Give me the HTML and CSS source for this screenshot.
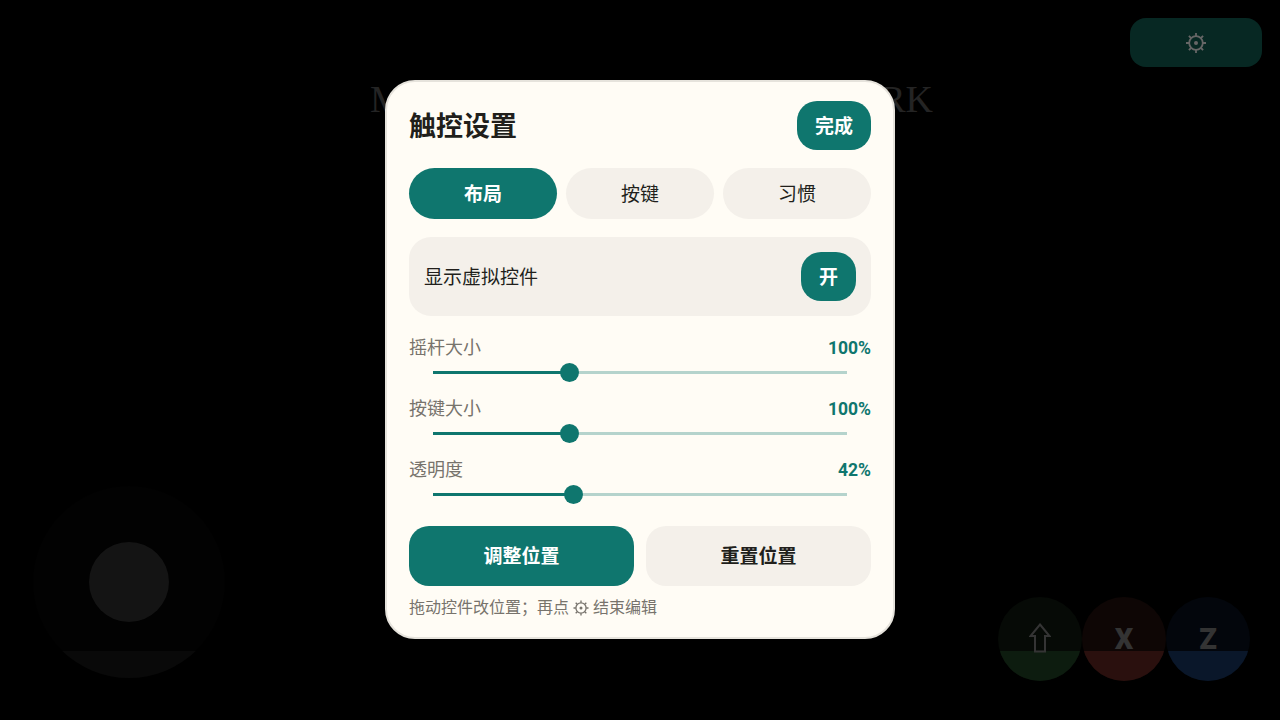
FILE: index.html
```html
<!DOCTYPE html>
<html lang="zh-CN">
<head>
    <meta charset="UTF-8">
    <meta name="viewport" content="width=device-width, initial-scale=1.0">
    <title>触控设置</title>
    <link rel="stylesheet" href="styles.css">
</head>
<body>
    <svg class="defs" width="0" height="0" aria-hidden="true">
        <symbol id="gear" viewBox="0 0 24 24">
            <circle cx="12" cy="12" r="6.8" fill="none" stroke="currentColor" stroke-width="1.8"/>
            <circle cx="12" cy="12" r="2" fill="currentColor"/>
            <path d="M12 2v3M12 19v3M2 12h3M19 12h3M4.9 4.9l2.1 2.1M17 17l2.1 2.1M4.9 19.1L7 17M17 7l2.1-2.1" fill="none" stroke="currentColor" stroke-width="1.8"/>
        </symbol>
    </svg>

    <div class="stage">
        <div class="game-title">MOTION OF THE NIGHT WORK</div>
        <button class="gear-btn"><svg class="gear-icon"><use href="#gear"/></svg></button>

        <div class="joystick">
            <div class="strip"></div>
            <div class="knob"></div>
        </div>

        <div class="actions">
            <div class="action action-green">
                <div class="strip"></div>
                <svg class="arrow-icon" viewBox="0 0 22 30"><path d="M11 1.5L20.5 13H16V28.5H6V13H1.5Z" fill="none" stroke="currentColor" stroke-width="2"/></svg>
            </div>
            <div class="action action-red"><div class="strip"></div><span class="action-label">X</span></div>
            <div class="action action-blue"><div class="strip"></div><span class="action-label">Z</span></div>
        </div>

        <div class="overlay">
            <div class="panel">
                <div class="panel-head">
                    <h1>触控设置</h1>
                    <button class="done-btn">完成</button>
                </div>

                <div class="tabs">
                    <button class="tab active">布局</button>
                    <button class="tab">按键</button>
                    <button class="tab">习惯</button>
                </div>

                <div class="toggle-row">
                    <span>显示虚拟控件</span>
                    <button class="toggle-btn">开</button>
                </div>

                <div class="slider">
                    <div class="slider-head"><span>摇杆大小</span><b>100%</b></div>
                    <div class="track"><div class="fill" style="width: 32.8%"></div><div class="thumb"></div></div>
                </div>
                <div class="slider">
                    <div class="slider-head"><span>按键大小</span><b>100%</b></div>
                    <div class="track"><div class="fill" style="width: 32.8%"></div><div class="thumb"></div></div>
                </div>
                <div class="slider">
                    <div class="slider-head"><span>透明度</span><b>42%</b></div>
                    <div class="track"><div class="fill" style="width: 33.7%"></div><div class="thumb"></div></div>
                </div>

                <div class="panel-actions">
                    <button class="wide-btn primary">调整位置</button>
                    <button class="wide-btn">重置位置</button>
                </div>
                <p class="hint">拖动控件改位置；再点 <svg class="hint-gear"><use href="#gear"/></svg> 结束编辑</p>
            </div>
        </div>
    </div>
</body>
</html>
```

FILE: styles.css
```css
* {
    box-sizing: border-box;
}

html, body {
    margin: 0;
    height: 100%;
    background: #000;
}

body {
    font-family: Roboto, "Noto Sans CJK SC", sans-serif;
    color: #211f1b;
}

button {
    font-family: inherit;
    border: 0;
    padding: 0;
}

.defs {
    position: absolute;
}

.stage {
    position: relative;
    width: 1280px;
    height: 720px;
    overflow: hidden;
}

.game-title {
    position: absolute;
    left: 370px;
    top: 76px;
    width: 563px;
    font-family: "Liberation Serif", serif;
    font-size: 38px;
    line-height: 46px;
    white-space: nowrap;
    text-align: justify;
    text-align-last: justify;
    color: #242424;
}

.gear-btn {
    position: absolute;
    left: 1130px;
    top: 18px;
    width: 132px;
    height: 49px;
    border-radius: 16px;
    background: #072823;
    color: #666;
    display: flex;
    align-items: center;
    justify-content: center;
}

.gear-icon {
    width: 24px;
    height: 24px;
}

.joystick {
    position: absolute;
    left: 33px;
    top: 486px;
    width: 192px;
    height: 192px;
    border-radius: 50%;
    overflow: hidden;
    background: #020202;
}

.knob {
    position: absolute;
    left: 56px;
    top: 56px;
    width: 80px;
    height: 80px;
    border-radius: 50%;
    background: #141414;
}

.strip {
    position: absolute;
    left: 0;
    right: 0;
    bottom: 0;
    height: 30px;
}

.joystick .strip {
    height: 27px;
    background: #090909;
}

.actions {
    position: absolute;
    left: 998px;
    top: 597px;
    display: flex;
}

.action {
    position: relative;
    width: 84px;
    height: 84px;
    border-radius: 50%;
    overflow: hidden;
    display: flex;
    align-items: center;
    justify-content: center;
}

.action-label {
    position: relative;
    font-weight: 900;
    font-size: 29px;
    color: #333;
}

.arrow-icon {
    position: relative;
    width: 22px;
    height: 30px;
    margin-bottom: 3px;
    color: #343434;
}

.action-green { background: #060a06; }
.action-green .strip { background: #0d1c0f; }
.action-red { background: #0e0605; }
.action-red .strip { background: #2a100e; }
.action-blue { background: #03060c; }
.action-blue .strip { background: #0a172a; }

.overlay {
    position: absolute;
    inset: 0;
    display: flex;
    align-items: center;
    justify-content: center;
}

.panel {
    width: 510px;
    height: 559px;
    margin-bottom: 1px;
    padding: 19px 22px 0;
    background: #fffcf5;
    border: 2px solid #e6e3dc;
    border-radius: 30px;
}

.panel-head {
    display: flex;
    align-items: center;
    justify-content: space-between;
}

h1 {
    margin: 0 0 2px;
    font-size: 27px;
    font-weight: 700;
}

.done-btn {
    width: 74px;
    height: 49px;
    padding-bottom: 2px;
    border-radius: 20px;
    background: #0f766e;
    color: #fff;
    font-size: 19px;
    font-weight: 700;
}

.tabs {
    display: flex;
    gap: 9px;
    margin-top: 18px;
}

.tab {
    flex: 1;
    height: 51px;
    padding-bottom: 2px;
    border-radius: 26px;
    background: #f4f0ea;
    color: #211f1b;
    font-size: 19px;
}

.tab.active {
    background: #0f766e;
    color: #fff;
    font-weight: 700;
}

.toggle-row {
    display: flex;
    align-items: center;
    justify-content: space-between;
    height: 79px;
    margin-top: 18px;
    padding: 0 15px;
    border-radius: 22px;
    background: #f4f0ea;
    font-size: 19px;
}

.toggle-row span {
    margin-bottom: 2px;
}

.toggle-btn {
    width: 55px;
    height: 49px;
    padding-bottom: 2px;
    border-radius: 20px;
    background: #0f766e;
    color: #fff;
    font-size: 19px;
    font-weight: 700;
}

.slider {
    height: 61px;
}

.toggle-row + .slider {
    margin-top: 19px;
}

.slider-head {
    display: flex;
    align-items: center;
    justify-content: space-between;
    height: 22px;
    font-size: 18px;
    color: #77736c;
}

.slider-head b {
    margin-top: 4px;
    font-size: 17.5px;
    color: #0f766e;
}

.track {
    position: relative;
    display: flex;
    align-items: center;
    height: 19px;
    margin: 6px 24px 0;
    background: linear-gradient(#b5d3cc, #b5d3cc) center / 100% 3px no-repeat;
}

.fill {
    position: relative;
    height: 3px;
    background: #0f766e;
}

.thumb {
    width: 19px;
    height: 19px;
    margin-left: -9px;
    border-radius: 50%;
    background: #0f766e;
    z-index: 1;
}

.panel-actions {
    display: flex;
    gap: 12px;
    margin-top: 8px;
}

.wide-btn {
    flex: 1;
    height: 60px;
    padding-bottom: 4px;
    border-radius: 20px;
    background: #f4f0ea;
    color: #211f1b;
    font-size: 19px;
    font-weight: 700;
}

.wide-btn.primary {
    background: #0f766e;
    color: #fff;
}

.hint {
    display: flex;
    align-items: center;
    margin: 9px 0 0;
    font-size: 16px;
    line-height: 26px;
    color: #77736c;
    white-space: pre;
}

.hint-gear {
    width: 18px;
    height: 18px;
    margin: 0 -1px;
}
```
